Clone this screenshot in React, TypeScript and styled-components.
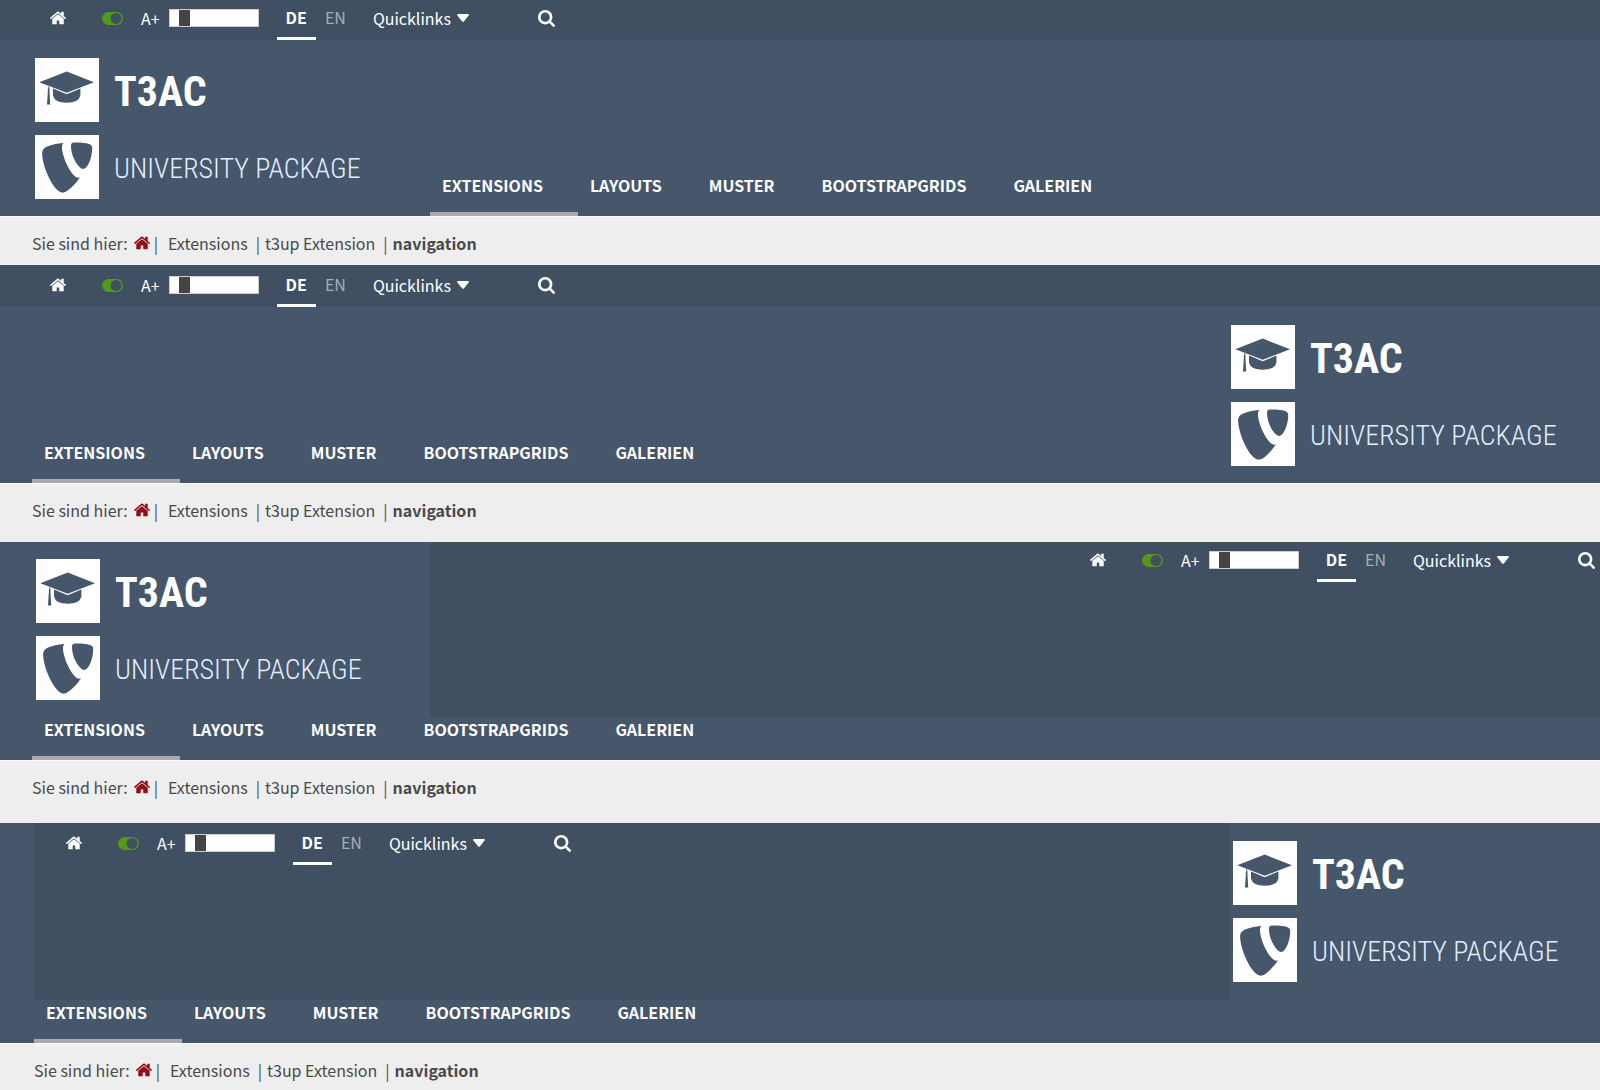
import React, { useId, useState } from 'react';
import styled, { createGlobalStyle } from 'styled-components';

const color = {
  bar: '#404f61',
  header: '#46566b',
  page: '#eeeeee',
  text: '#4a4a4a',
  accent: '#8f0e1a',
  green: '#539a1b',
  line: '#aba9aa',
};

const GlobalStyle = createGlobalStyle`
  *, *::before, *::after { box-sizing: border-box; }
  body {
    margin: 0;
    background: ${color.page};
    color: ${color.text};
    font-family: "Noto Sans CJK SC", "Noto Sans", sans-serif;
    font-size: 16px;
    line-height: 24px;
  }
  a { color: inherit; text-decoration: none; }
  ul, ol { margin: 0; padding: 0; list-style: none; }
`;

/* ---------- icons ---------- */

function HomeIcon() {
  return (
    <svg width="16" height="14" viewBox="90 253 1612 1290" aria-hidden="true">
      <path
        fill="currentColor"
        d="M1472 992v480q0 26-19 45t-45 19h-384v-384h-256v384h-384q-26 0-45-19t-19-45v-480q0-1 .5-3t.5-3l575-474 575 474q1 2 1 6zm223-69l-62 74q-8 9-21 11h-3q-13 0-21-7l-692-577-692 577q-12 8-24 7-13-2-21-11l-62-74q-8-10-7-23.500t11-21.500l719-599q32-26 76-26t76 26l244 204v-195q0-14 9-23t23-9h192q14 0 23 9t9 23v408l219 182q10 8 11 21.500t-7 23.500z"
      />
    </svg>
  );
}

function SearchIcon() {
  return (
    <svg width="17" height="17" viewBox="64 128 1664 1664" aria-hidden="true">
      <path
        fill="currentColor"
        d="M1216 832q0-185-131.500-316.500t-316.500-131.500-316.500 131.500-131.500 316.500 131.500 316.500 316.500 131.500 316.500-131.500 131.500-316.500zm512 832q0 52-38 90t-90 38q-54 0-90-38l-343-342q-179 124-399 124-143 0-273.500-55.500t-225-150-150-225-55.500-273.500 55.500-273.500 150-225 225-150 273.500-55.500 273.500 55.500 225 150 150 225 55.500 273.500q0 220-124 399l343 343q37 37 37 90z"
      />
    </svg>
  );
}

function Caret() {
  return (
    <svg width="12" height="8" viewBox="0 0 12 8" aria-hidden="true">
      <path d="M1 0H11Q12.4 .4 11.6 1.5L7 7.2Q6 8.3 5 7.2L.4 1.5Q-.4 .4 1 0Z" fill="currentColor" />
    </svg>
  );
}

/* ---------- tool bar ---------- */

const Toolbar = styled.div<{ $height: number; $start: number; $right?: boolean }>`
  display: flex;
  align-items: flex-end;
  justify-content: ${(p) => (p.$right ? 'flex-end' : 'flex-start')};
  height: ${(p) => p.$height}px;
  padding: 0 5px 0 ${(p) => p.$start}px;
  background: ${color.bar};
  color: #fff;
`;

const Tools = styled.div`
  display: flex;
  height: 42px;
  padding-bottom: 2px;
  align-items: center;
`;

const IconLink = styled.a`
  display: flex;
  margin-right: 36px;
`;

const Toggle = styled.input`
  appearance: none;
  width: 21px;
  height: 13px;
  margin: 0 18px 0 0;
  border-radius: 7px;
  background: radial-gradient(circle at 14px 50%, ${color.bar} 5px, ${color.green} 6px);
`;

const SizeLabel = styled.label`
  margin-right: 9px;
`;

const Range = styled.input`
  appearance: none;
  width: 90px;
  height: 18px;
  margin: 0 18px 0 0;
  border: 1px solid #ccc;
  background: #fff;

  &::-webkit-slider-thumb {
    appearance: none;
    width: 11px;
    height: 16px;
    background: #444;
  }
`;

const Languages = styled.ul`
  display: flex;
  align-self: stretch;
  margin-right: 18px;
`;

const Language = styled.a<{ $active?: boolean }>`
  display: block;
  height: 42px;
  padding: 7px 9px 0;
  border-bottom: 3px solid ${(p) => (p.$active ? '#fff' : 'transparent')};
  color: ${(p) => (p.$active ? '#fff' : '#a9adb3')};
  font-weight: ${(p) => (p.$active ? 700 : 400)};
`;

const PlainButton = styled.button`
  display: flex;
  align-items: center;
  gap: 6px;
  padding: 0;
  border: 0;
  background: none;
  color: inherit;
  font: inherit;
`;

const QuickButton = styled(PlainButton)`
  margin-right: 69px;
`;

function ToolItems() {
  const id = useId();
  const [size, setSize] = useState(12);
  return (
    <Tools>
      <IconLink href="#home" aria-label="Startseite">
        <HomeIcon />
      </IconLink>
      <Toggle type="checkbox" defaultChecked aria-label="Kontrast" />
      <SizeLabel htmlFor={id}>A+</SizeLabel>
      <Range id={id} type="range" value={size} onChange={(e) => setSize(Number(e.target.value))} />
      <Languages>
        <li><Language href="#de" $active>DE</Language></li>
        <li><Language href="#en">EN</Language></li>
      </Languages>
      <QuickButton type="button" aria-haspopup="true">Quicklinks<Caret /></QuickButton>
      <PlainButton type="button" aria-label="Suche"><SearchIcon /></PlainButton>
    </Tools>
  );
}

/* ---------- logo ---------- */

const LogoBlock = styled.a<{ $side: 'left' | 'right'; $top: number; $start: number }>`
  display: flex;
  flex-direction: column;
  flex: 0 0 ${(p) => (p.$side === 'left' ? 430 : 371)}px;
  gap: 13px;
  padding: ${(p) => p.$top}px 0 0 ${(p) => p.$start}px;
  white-space: nowrap;
`;

const LogoRow = styled.span`
  display: flex;
  align-items: center;
  gap: 15px;
  height: 64px;
`;

const LogoText = styled.span`
  padding-top: 4px;
  font-family: "Roboto Condensed", "Liberation Sans Narrow", "Liberation Sans", sans-serif;
  line-height: 60px;
`;

const LogoTitle = styled(LogoText)`
  color: #fff;
  font-size: 42px;
  font-weight: 700;
`;

const LogoSub = styled(LogoText)`
  color: #e3edff;
  font-size: 28px;
  font-weight: 300;
`;

function CapMark() {
  return (
    <svg width="64" height="64" viewBox="0 0 64 64" aria-hidden="true">
      <rect width="64" height="64" fill="#fff" />
      <g fill={color.header}>
        <path d="M31.7 13.6 59 24.2 31.7 34.8 4.3 24.2Z" />
        <path d="M18 30.6 31.7 36.2 45.4 30.6V37.5Q44 44.6 31.7 44.8 19.400 44.6 18 37.500Z" />
        <path d="M13.2 28.600H14.300V30.500Q15 31 14.400 32.200L15.200 46.500H12L12.900 32.200Q12.300 31 13.200 30.500Z" />
      </g>
    </svg>
  );
}

function ShieldMark() {
  return (
    <svg width="64" height="64" viewBox="0 0 64 64" aria-hidden="true">
      <rect width="64" height="64" fill="#fff" />
      <g fill={color.header}>
        <path d="M28.500 8C20 8.600 12 10.800 9 13.500 7.500 15 7 16.500 7.100 19 7.500 29 13 43 19.500 52 23 56.500 26 58 28.300 57.600 33 57 41 48.500 45 42.300 44 42.700 43 42.700 42 42.500 36 40 28 24 27 13.500 26.900 11 27.200 9 28.500 8Z" />
        <path d="M36 11C36 8.500 37 7.800 39 7.600 44 7.300 50 7.800 54 9 56.500 10 57.300 11 57.200 14 57 21 54.500 29 51 32.500 49 34.500 47 34.300 45 32.500 40 28 36 19 36 11Z" />
      </g>
    </svg>
  );
}

function Logo({ side, top, start }: { side: 'left' | 'right'; top: number; start: number }) {
  return (
    <LogoBlock href="#start" $side={side} $top={top} $start={start}>
      <LogoRow><CapMark /><LogoTitle>T3AC</LogoTitle></LogoRow>
      <LogoRow><ShieldMark /><LogoSub>UNIVERSITY PACKAGE</LogoSub></LogoRow>
    </LogoBlock>
  );
}

/* ---------- main navigation and breadcrumb ---------- */

const NavBar = styled.nav<{ $start: number }>`
  align-self: flex-end;
  flex: 1;
  padding-left: ${(p) => p.$start}px;
`;

const NavList = styled.ul`
  display: flex;
`;

const NavLink = styled.a<{ $active?: boolean }>`
  display: block;
  padding: 0 35px 15px 12px;
  border-bottom: 4px solid ${(p) => (p.$active ? color.line : 'transparent')};
  color: #fff;
  font-weight: 700;
  line-height: 24px;
`;

const entries = ['EXTENSIONS', 'LAYOUTS', 'MUSTER', 'BOOTSTRAPGRIDS', 'GALERIEN'];

function MainNav({ start }: { start: number }) {
  return (
    <NavBar $start={start} aria-label="Hauptnavigation">
      <NavList>
        {entries.map((label, i) => (
          <li key={label}>
            <NavLink href={`#${label.toLowerCase()}`} $active={i === 0}>{label}</NavLink>
          </li>
        ))}
      </NavList>
    </NavBar>
  );
}

const CrumbBar = styled.nav<{ $start: number; $bottom: number }>`
  display: flex;
  padding: 14px 0 ${(p) => p.$bottom}px ${(p) => p.$start}px;
  border-top: 1px solid #fafafa;
`;

const CrumbList = styled.ol`
  display: flex;
  margin-left: 6px;
`;

const Crumb = styled.li<{ $before?: number; $after?: number }>`
  display: flex;
  align-items: center;

  &:not(:first-child)::before {
    content: "|";
    margin: 0 ${(p) => p.$after ?? 5}px 0 ${(p) => p.$before ?? 8}px;
  }
`;

const HomeCrumb = styled.a`
  display: flex;
  color: ${color.accent};
`;

function Breadcrumb({ start, bottom }: { start: number; bottom: number }) {
  return (
    <CrumbBar $start={start} $bottom={bottom} aria-label="Brotkrumen">
      <span>Sie sind hier:</span>
      <CrumbList>
        <Crumb><HomeCrumb href="#home" aria-label="Startseite"><HomeIcon /></HomeCrumb></Crumb>
        <Crumb $before={4} $after={10}><a href="#extensions">Extensions</a></Crumb>
        <Crumb><a href="#t3up">t3up Extension</a></Crumb>
        <Crumb><strong>navigation</strong></Crumb>
      </CrumbList>
    </CrumbBar>
  );
}

/* ---------- header variants ---------- */

const Header = styled.header`
  background: ${color.header};
`;

const Body = styled.div<{ $height: number }>`
  display: flex;
  min-height: ${(p) => p.$height}px;
`;

const Panel = styled.div`
  flex: 1;
  background: ${color.bar};
`;

const Inset = styled(Body)<{ $inset: number }>`
  padding-left: ${(p) => p.$inset}px;
`;

export default function App() {
  return (
    <>
      <GlobalStyle />
      <section>
        <Header>
          <Toolbar $height={40} $start={50}><ToolItems /></Toolbar>
          <Body $height={176}>
            <Logo side="left" top={18} start={35} />
            <MainNav start={0} />
          </Body>
        </Header>
        <Breadcrumb start={32} bottom={10} />
      </section>
      <section>
        <Header>
          <Toolbar $height={42} $start={50}><ToolItems /></Toolbar>
          <Body $height={176}>
            <MainNav start={32} />
            <Logo side="right" top={18} start={2} />
          </Body>
        </Header>
        <Breadcrumb start={32} bottom={20} />
      </section>
      <section>
        <Header>
          <Body $height={175}>
            <Logo side="left" top={17} start={36} />
            <Panel><Toolbar $height={40} $start={0} $right><ToolItems /></Toolbar></Panel>
          </Body>
          <MainNav start={32} />
        </Header>
        <Breadcrumb start={32} bottom={24} />
      </section>
      <section>
        <Header>
          <Inset $height={177} $inset={34}>
            <Panel><Toolbar $height={42} $start={32}><ToolItems /></Toolbar></Panel>
            <Logo side="right" top={18} start={4} />
          </Inset>
          <MainNav start={34} />
        </Header>
        <Breadcrumb start={34} bottom={8} />
      </section>
    </>
  );
}
